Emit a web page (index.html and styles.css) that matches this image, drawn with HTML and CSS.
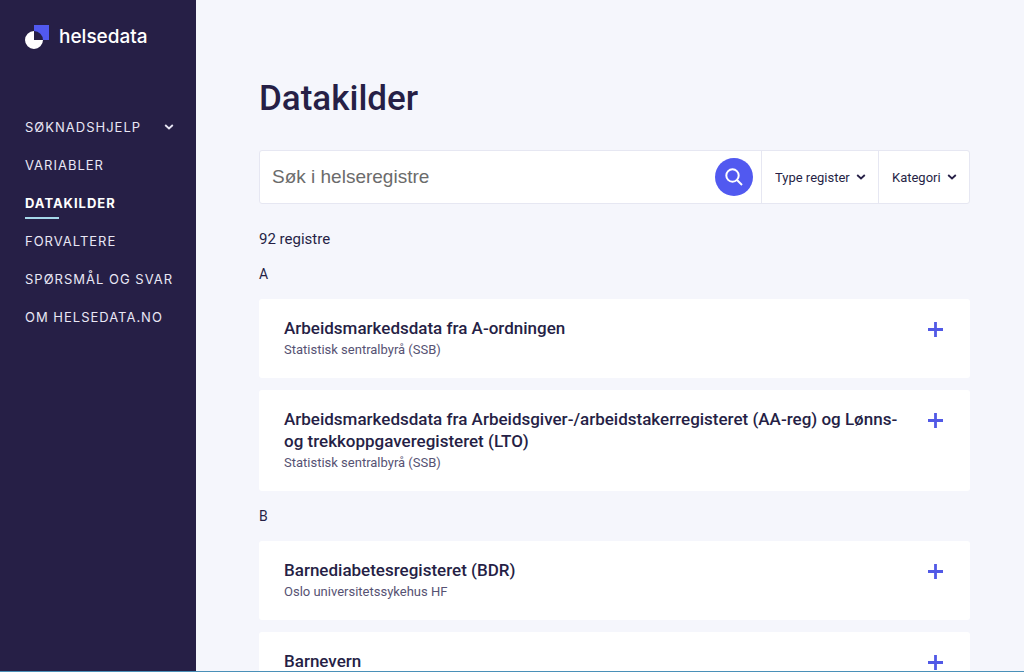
FILE: index.html
```html
<!DOCTYPE html>
<html lang="no">
<head>
<meta charset="utf-8">
<meta name="viewport" content="width=device-width, initial-scale=1">
<title>Datakilder - helsedata</title>
<link rel="stylesheet" href="styles.css">
</head>
<body>
<svg class="symbols" aria-hidden="true">
  <symbol id="chevron" viewBox="0 0 10 8"><path d="M1.2 2 5 5.5 8.8 2" fill="none" stroke="currentColor" stroke-width="1.8"/></symbol>
  <symbol id="plus" viewBox="0 0 15 15"><path d="M7.5 0v15M0 7.5h15" fill="none" stroke="currentColor" stroke-width="2.8"/></symbol>
</svg>
<div class="shell">
  <header class="sidebar">
    <a class="logo" href="#">
      <svg class="logo-mark" viewBox="0 0 24 24" aria-hidden="true">
        <path d="M9 0h15v15h-6A9 9 0 0 0 9 6z" fill="#5159f0"/>
        <path d="M9 6v9h9a9 9 0 1 1-9-9z" fill="#fff"/>
      </svg>
      <span>helsedata</span>
    </a>
    <nav class="menu">
      <button class="menu-item" type="button" aria-expanded="false"><span>SØKNADSHJELP</span><svg class="chevron"><use href="#chevron"/></svg></button>
      <a class="menu-item" href="#">VARIABLER</a>
      <a class="menu-item active" href="#" aria-current="page">DATAKILDER</a>
      <a class="menu-item" href="#">FORVALTERE</a>
      <a class="menu-item" href="#">SPØRSMÅL OG SVAR</a>
      <a class="menu-item" href="#">OM HELSEDATA.NO</a>
    </nav>
  </header>
  <main class="content">
    <h1 class="title">Datakilder</h1>
    <form class="search">
      <input class="search-input" type="text" placeholder="Søk i helseregistre" aria-label="Søk i helseregistre">
      <button class="search-button" type="button" aria-label="Søk">
        <svg class="search-icon" viewBox="0 0 18 18"><circle cx="7.5" cy="7.5" r="6.2"/><path d="m12 12 5 5"/></svg>
      </button>
      <div class="filter">
        <select class="filter-select" aria-label="Type register"><option>Type register</option></select>
        <svg class="chevron"><use href="#chevron"/></svg>
      </div>
      <div class="filter">
        <select class="filter-select" aria-label="Kategori"><option>Kategori</option></select>
        <svg class="chevron"><use href="#chevron"/></svg>
      </div>
    </form>
    <p class="count">92 registre</p>
    <section class="group">
      <h2 class="letter">A</h2>
      <article class="card">
        <div class="card-text"><h3 class="card-title">Arbeidsmarkedsdata fra A-ordningen</h3><p class="owner">Statistisk sentralbyrå (SSB)</p></div>
        <button class="expand" type="button" aria-label="Vis mer"><svg class="plus"><use href="#plus"/></svg></button>
      </article>
      <article class="card">
        <div class="card-text"><h3 class="card-title">Arbeidsmarkedsdata fra Arbeidsgiver-/arbeidstakerregisteret (AA-reg) og Lønns- og trekkoppgaveregisteret (LTO)</h3><p class="owner">Statistisk sentralbyrå (SSB)</p></div>
        <button class="expand" type="button" aria-label="Vis mer"><svg class="plus"><use href="#plus"/></svg></button>
      </article>
    </section>
    <section class="group">
      <h2 class="letter">B</h2>
      <article class="card">
        <div class="card-text"><h3 class="card-title">Barnediabetesregisteret (BDR)</h3><p class="owner">Oslo universitetssykehus HF</p></div>
        <button class="expand" type="button" aria-label="Vis mer"><svg class="plus"><use href="#plus"/></svg></button>
      </article>
      <article class="card">
        <div class="card-text"><h3 class="card-title">Barnevern</h3></div>
        <button class="expand" type="button" aria-label="Vis mer"><svg class="plus"><use href="#plus"/></svg></button>
      </article>
    </section>
  </main>
</div>
</body>
</html>
```
FILE: styles.css
```css
* { box-sizing: border-box; }
body {
  margin: 0;
  background: #f5f6fc;
  color: #261f46;
  font-family: Roboto, "Liberation Sans", sans-serif;
}
h1, h2, h3, p { margin: 0; }
a { color: inherit; text-decoration: none; }
button { padding: 0; border: 0; background: none; color: inherit; font: inherit; cursor: pointer; }
.symbols { display: none; }
.shell {
  display: flex;
  height: 100vh;
  overflow: hidden;
  border-bottom: 1px solid #4a90b8;
}
.sidebar {
  flex: none;
  width: 196px;
  padding: 24px 18px 24px 25px;
  background: #261f46;
  color: #fff;
  font-family: Inter, "Liberation Sans", sans-serif;
}
.logo {
  display: flex;
  align-items: center;
  gap: 10px;
  font-size: 19px;
  font-weight: 500;
  line-height: 26px;
}
.logo-mark { width: 24px; height: 24px; }
.menu { display: flex; flex-direction: column; margin-top: 58px; }
.menu-item {
  display: flex;
  align-items: center;
  justify-content: space-between;
  height: 38px;
  padding-right: 4px;
  color: #e9e7f5;
  font-size: 13px;
  letter-spacing: 1px;
  white-space: nowrap;
}
.active { position: relative; color: #fff; font-weight: 700; }
.active::after {
  content: "";
  position: absolute;
  left: 0;
  bottom: 3px;
  width: 34px;
  height: 2px;
  background: #a6d8ea;
}
.chevron { flex: none; width: 10px; height: 8px; }
.content {
  flex: 1;
  min-width: 0;
  padding: 75px 54px 40px 63px;
  overflow-y: auto;
  scrollbar-width: none;
}
.title { font-size: 35px; font-weight: 500; line-height: 48px; }
.search {
  display: flex;
  align-items: center;
  height: 54px;
  margin-top: 27px;
  border: 1px solid #e6e7f2;
  border-radius: 3px;
  background: #fff;
}
.search-input {
  flex: 1;
  min-width: 0;
  height: 100%;
  padding: 0 12px;
  border: 0;
  background: none;
  font-family: "Liberation Sans", Arial, sans-serif;
  font-size: 19px;
}
.search-input::placeholder { color: #6b6b6b; }
.search-button {
  display: grid;
  place-items: center;
  flex: none;
  width: 38px;
  height: 38px;
  margin-right: 8px;
  border-radius: 50%;
  background: #5159f0;
}
.search-icon { width: 18px; height: 18px; fill: none; stroke: #fff; stroke-width: 2; }
.filter {
  display: flex;
  align-items: center;
  gap: 6px;
  height: 100%;
  padding: 0 12px 0 13px;
  border-left: 1px solid #e6e7f2;
}
.filter-select {
  appearance: none;
  height: 100%;
  padding: 0;
  border: 0;
  background: none;
  color: inherit;
  font-family: inherit;
  font-size: 13px;
}
.count { margin-top: 24px; font-size: 15px; line-height: 22px; }
.letter { padding: 14px 0; font-size: 14px; font-weight: 400; line-height: 22px; }
.count + .group { margin-top: -1px; }
.card {
  display: flex;
  align-items: flex-start;
  justify-content: space-between;
  gap: 16px;
  padding: 18px 27px 18px 25px;
  border-radius: 3px;
  background: #fff;
}
.card + .card { margin-top: 12px; }
.card-title { font-size: 17px; font-weight: 500; line-height: 22px; }
.owner { color: #565273; font-size: 13px; line-height: 21px; }
.expand { flex: none; display: flex; padding-top: 5px; color: #5159e6; }
.plus { width: 15px; height: 15px; }
```
